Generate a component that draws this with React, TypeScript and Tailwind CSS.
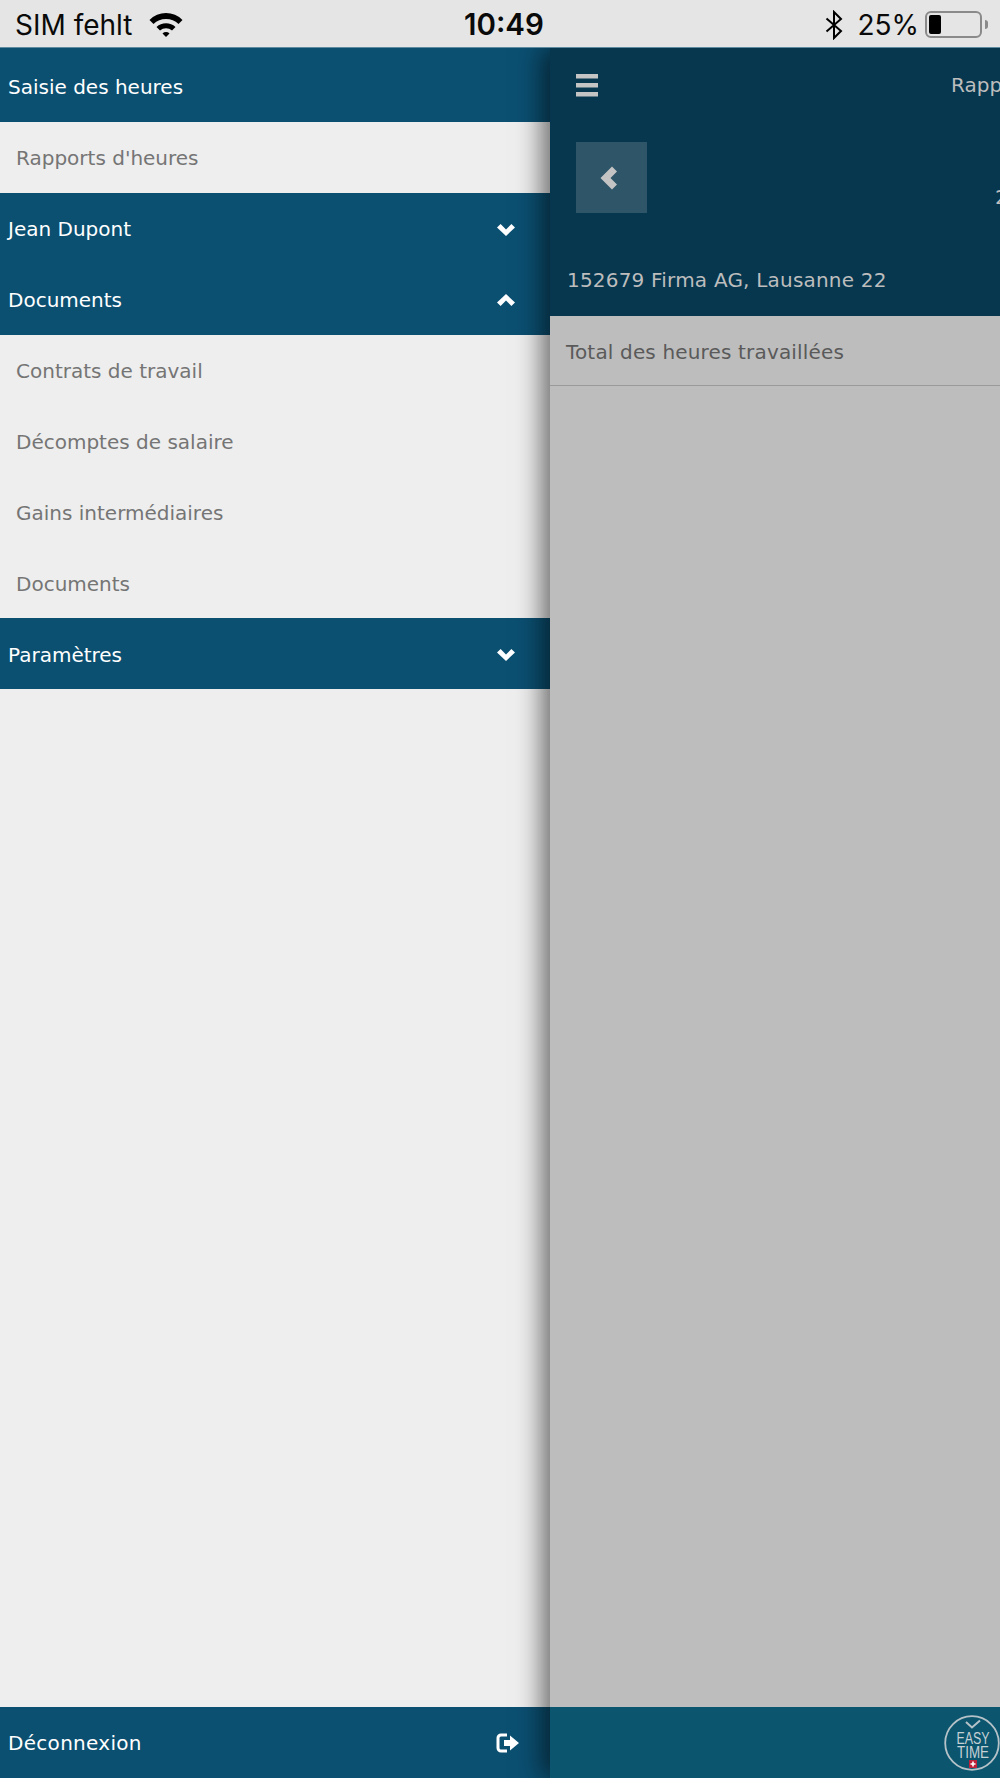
const menuFont = 'font-["DejaVu_Sans",sans-serif]';

function Chevron({ up = false }: { up?: boolean }) {
  return (
    <svg width="20" height="15" viewBox="0 0 20 15" className={up ? 'rotate-180' : ''}>
      <path d="M1 5.5 4.600 2 10 7.400 15.400 2 19 5.500 10 14z" fill="#fff" />
    </svg>
  );
}

function GroupRow({ label, icon, tall = false, className = 'pt-[2px]' }: { label: string; icon?: React.ReactNode; tall?: boolean; className?: string }) {
  return (
    <div className={`flex items-center justify-between pl-2 pr-[34px] bg-[#0b4f71] text-white text-[20px] shrink-0 ${tall ? 'h-[74px] pt-[3px]' : 'h-[70.9px]'} ${className}`}>
      <span>{label}</span>
      {icon}
    </div>
  );
}

function SubRow({ label }: { label: string }) {
  return <div className="flex items-center h-[70.9px] pl-4 pt-[2px] text-[20px] text-[#757575] shrink-0">{label}</div>;
}

function Logo() {
  return (
    <svg width="58" height="58" viewBox="0 0 58 58" className="-mr-px">
      <circle cx="29" cy="29" r="26.800" fill="none" stroke="#b5c2c8" strokeWidth="1.800" />
      <path d="M23 8 29 13.500 37 6.500" fill="none" stroke="#b5c2c8" strokeWidth="2" />
      <text x="30" y="30" textAnchor="middle" fontFamily="Liberation Sans, sans-serif" fontSize="16" textLength="33" lengthAdjust="spacingAndGlyphs" fill="#c5d0d4">EASY</text>
      <text x="30" y="44" textAnchor="middle" fontFamily="Liberation Sans, sans-serif" fontSize="16" textLength="32" lengthAdjust="spacingAndGlyphs" fill="#c5d0d4">TIME</text>
      <rect x="26" y="46" width="8" height="8" fill="#c0213a" />
      <path d="M30 47.500v5M27.500 50h5" stroke="#fff" strokeWidth="1.600" />
    </svg>
  );
}

export default function App() {
  return (
    <div className="h-[1778px] w-[1000px] flex flex-col overflow-hidden bg-[#eeeeee]">
      <div className="h-12 shrink-0 relative z-20 flex items-center justify-between bg-[#e5e5e5] border-b border-[#5f8ba0] pt-[2px] pl-[15px] pr-[12px] font-['Inter',sans-serif] text-[#0a0a0a]">
        <div className="flex items-center gap-[17px]">
          <span className="text-[28px] leading-none">SIM fehlt</span>
          <svg width="34" height="24" viewBox="0 0 34 24">
            <path d="M0.500 7A23 23 0 0 1 33.500 7L29.500 11A18 18 0 0 0 4.500 11z" fill="#000" />
            <path d="M7.500 14A14 14 0 0 1 26.500 14L23 17.500A9 9 0 0 0 11 17.500z" fill="#000" />
            <path d="M13.500 20.500A5 5 0 0 1 20.500 20.500L17 24z" fill="#000" />
          </svg>
        </div>
        <span className="absolute left-[464px] text-[29.500px] font-semibold leading-none">10:49</span>
        <div className="flex items-center">
          <svg width="18" height="30" viewBox="0 0 18 30" className="mr-[14px]">
            <path d="M1.500 8.500 16 21 9 28V2l7 7L1.500 21.500" fill="none" stroke="#000" strokeWidth="2" />
          </svg>
          <span className="text-[28px] leading-none mr-[6px]">25%</span>
          <div className="w-[57px] h-[27px] rounded-[6px] border-2 border-[#8a8a8a] p-[2px]">
            <div className="w-[12px] h-full rounded-[2px] bg-black" />
          </div>
          <div className="w-[3px] h-[9px] bg-[#8a8a8a] rounded-r-[3px] ml-[3px]" />
        </div>
      </div>

      <div className={`flex-1 flex min-h-0 ${menuFont}`}>
        <div className="w-[550px] shrink-0 flex flex-col">
          <GroupRow label="Saisie des heures" tall className="" />
          <SubRow label="Rapports d'heures" />
          <GroupRow label="Jean Dupont" icon={<Chevron />} />
          <GroupRow label="Documents" icon={<Chevron up />} />
          <SubRow label="Contrats de travail" />
          <SubRow label="Décomptes de salaire" />
          <SubRow label="Gains intermédiaires" />
          <SubRow label="Documents" />
          <GroupRow label="Paramètres" icon={<Chevron />} />
          <div className="flex-1" />
          <GroupRow
            label="Déconnexion"
            className="tracking-[0.3px]"
            icon={
              <svg width="24" height="20" viewBox="0 0 24 20" className="-mr-1">
                <path d="M11 2H5a3 3 0 0 0-3 3v10a3 3 0 0 0 3 3h6" fill="none" stroke="#fff" strokeWidth="3" />
                <path d="M8 7h6V2.500L23 10l-9 7.500V13H8z" fill="#fff" />
              </svg>
            }
          />
        </div>

        <div className="w-[450px] shrink-0 relative z-10 flex flex-col bg-[#bdbdbd] shadow-[-8px_0_24px_rgba(0,0,0,0.55)]">
          <div className="h-[268px] shrink-0 bg-[#06374f] text-[#bdbdbd] text-[20px] flex flex-col overflow-hidden">
            <div className="flex items-center pl-[26px] h-[74px] shrink-0 whitespace-nowrap">
              <svg width="22" height="23" viewBox="0 0 22 23" className="shrink-0">
                <path d="M0 0h22v4.500H0zM0 9h22v4.500H0zM0 18h22v4.500H0z" fill="#c4c4c4" />
              </svg>
              <span className="ml-[353px]">Rapports d'heures</span>
            </div>
            <div className="flex pl-[26px] mt-[20px] h-[71px] shrink-0 whitespace-nowrap">
              <div className="w-[71px] h-[71px] shrink-0 flex items-center justify-center bg-[#2e5568]">
                <svg width="18" height="24" viewBox="0 0 18 24" className="mr-[5px]">
                  <path d="M12 0.500 17 5.500 10.500 12 17 18.500 12 23.500 0.500 12z" fill="#c4c4c4" />
                </svg>
              </div>
              <span className="ml-[348px] mt-[45px] leading-none">2</span>
            </div>
            <div className="flex-1 flex items-center pl-[17px] pt-[31px] whitespace-nowrap tracking-[0.2px]">152679 Firma AG, Lausanne 22</div>
          </div>
          <div className="h-[70px] shrink-0 flex items-center pl-4 pt-[3px] text-[20px] tracking-[0.16px] text-[#5a5a5a] border-b border-[#9a9a9a]">Total des heures travaillées</div>
          <div className="flex-1" />
          <div className="h-[71px] shrink-0 flex items-center justify-end bg-[#0b556f]">
            <Logo />
          </div>
        </div>
      </div>
    </div>
  );
}
